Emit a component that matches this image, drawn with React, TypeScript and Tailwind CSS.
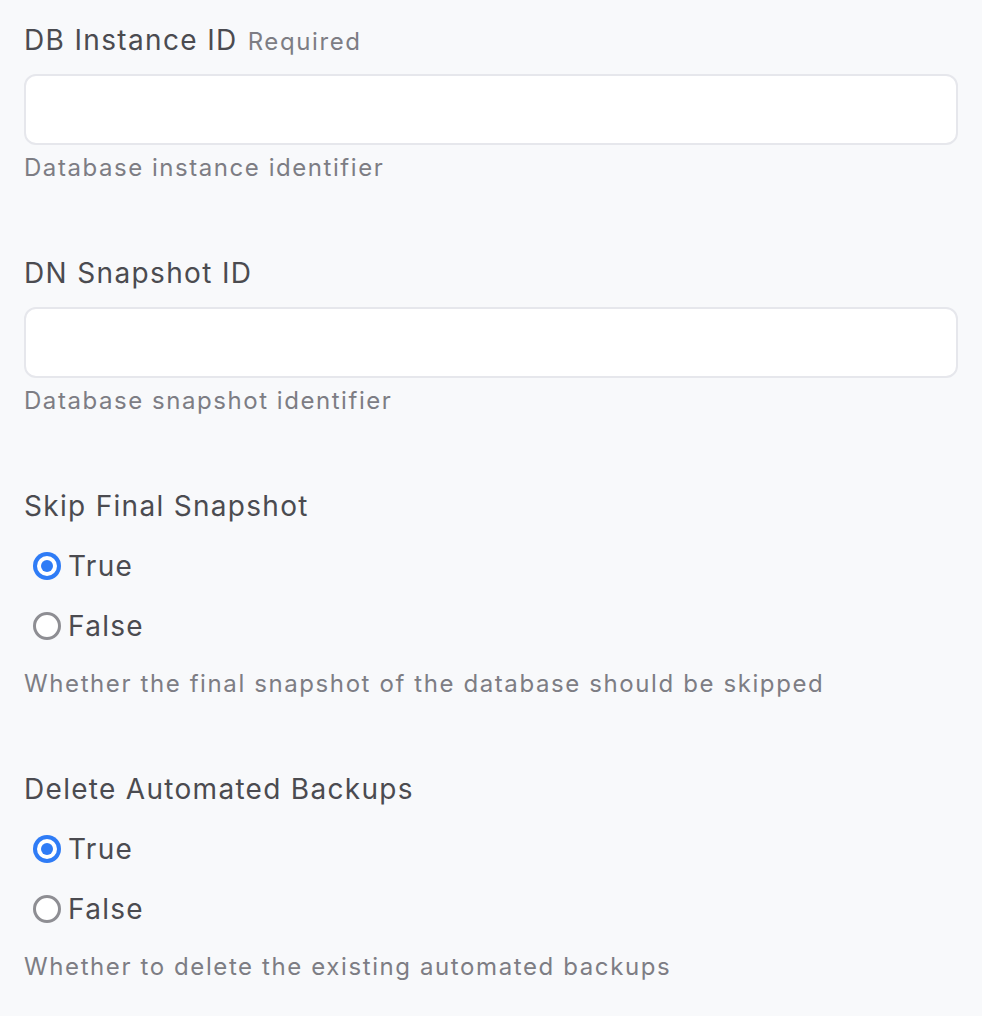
import { useState } from "react";

const font = { fontFamily: "Inter, 'Noto Sans', sans-serif" };

function Radio({ checked, label, onClick }: { checked: boolean; label: string; onClick: () => void }) {
  return (
    <button type="button" onClick={onClick} className="flex h-[60px] items-center pl-[9px]">
      {checked ? (
        <span className="flex h-[28px] w-[28px] items-center justify-center rounded-full bg-[#2f7cf6]">
          <span className="flex h-[20px] w-[20px] items-center justify-center rounded-full bg-white">
            <span className="h-[12px] w-[12px] rounded-full bg-[#2f7cf6]" />
          </span>
        </span>
      ) : (
        <span className="h-[28px] w-[28px] rounded-full border-[3.5px] border-[#8e8e93] bg-white" />
      )}
      <span className="ml-[7px] text-[28px] leading-[42px] tracking-[1.3px] text-[#4b4b50]">{label}</span>
    </button>
  );
}

function TextField({ label, required, help }: { label: string; required?: boolean; help: string }) {
  const [value, setValue] = useState("");
  return (
    <div className="flex flex-col">
      <label className="flex h-[42px] items-baseline text-[28px] leading-[42px] tracking-[1.35px] text-[#4b4b50]">
        {label}
        {required && <span className="ml-[10px] text-[24px] leading-none tracking-[1.6px] text-[#7d7d84]">Required</span>}
      </label>
      <input
        type="text"
        value={value}
        onChange={(e) => setValue(e.target.value)}
        className="mt-[13px] h-[71px] w-full rounded-[12px] border-2 border-[#e6e7ec] bg-white px-4 text-[28px] text-[#4b4b50] outline-none"
      />
      <p className="mt-[7px] text-[24px] leading-[32px] tracking-[1.55px] text-[#7d7d84]">{help}</p>
    </div>
  );
}

function BoolField({ label, help }: { label: string; help: string }) {
  const [val, setVal] = useState(true);
  return (
    <div className="flex flex-col">
      <label className="text-[28px] leading-[42px] tracking-[1.3px] text-[#4b4b50]">{label}</label>
      <div className="mt-[9px] flex flex-col">
        <Radio checked={val} label="True" onClick={() => setVal(true)} />
        <Radio checked={!val} label="False" onClick={() => setVal(false)} />
      </div>
      <p className="mt-[12px] text-[24px] leading-[32px] tracking-[1.6px] text-[#7d7d84]">{help}</p>
    </div>
  );
}

export default function App() {
  return (
    <div style={font} className="min-h-[1016px] bg-[#f8f9fb] px-[24px] pt-[19px]">
      <div className="flex flex-col gap-[68px]">
        <TextField label="DB Instance ID" required help="Database instance identifier" />
        <TextField label="DN Snapshot ID" help="Database snapshot identifier" />
        <BoolField label="Skip Final Snapshot" help="Whether the final snapshot of the database should be skipped" />
        <BoolField label="Delete Automated Backups" help="Whether to delete the existing automated backups" />
      </div>
    </div>
  );
}
